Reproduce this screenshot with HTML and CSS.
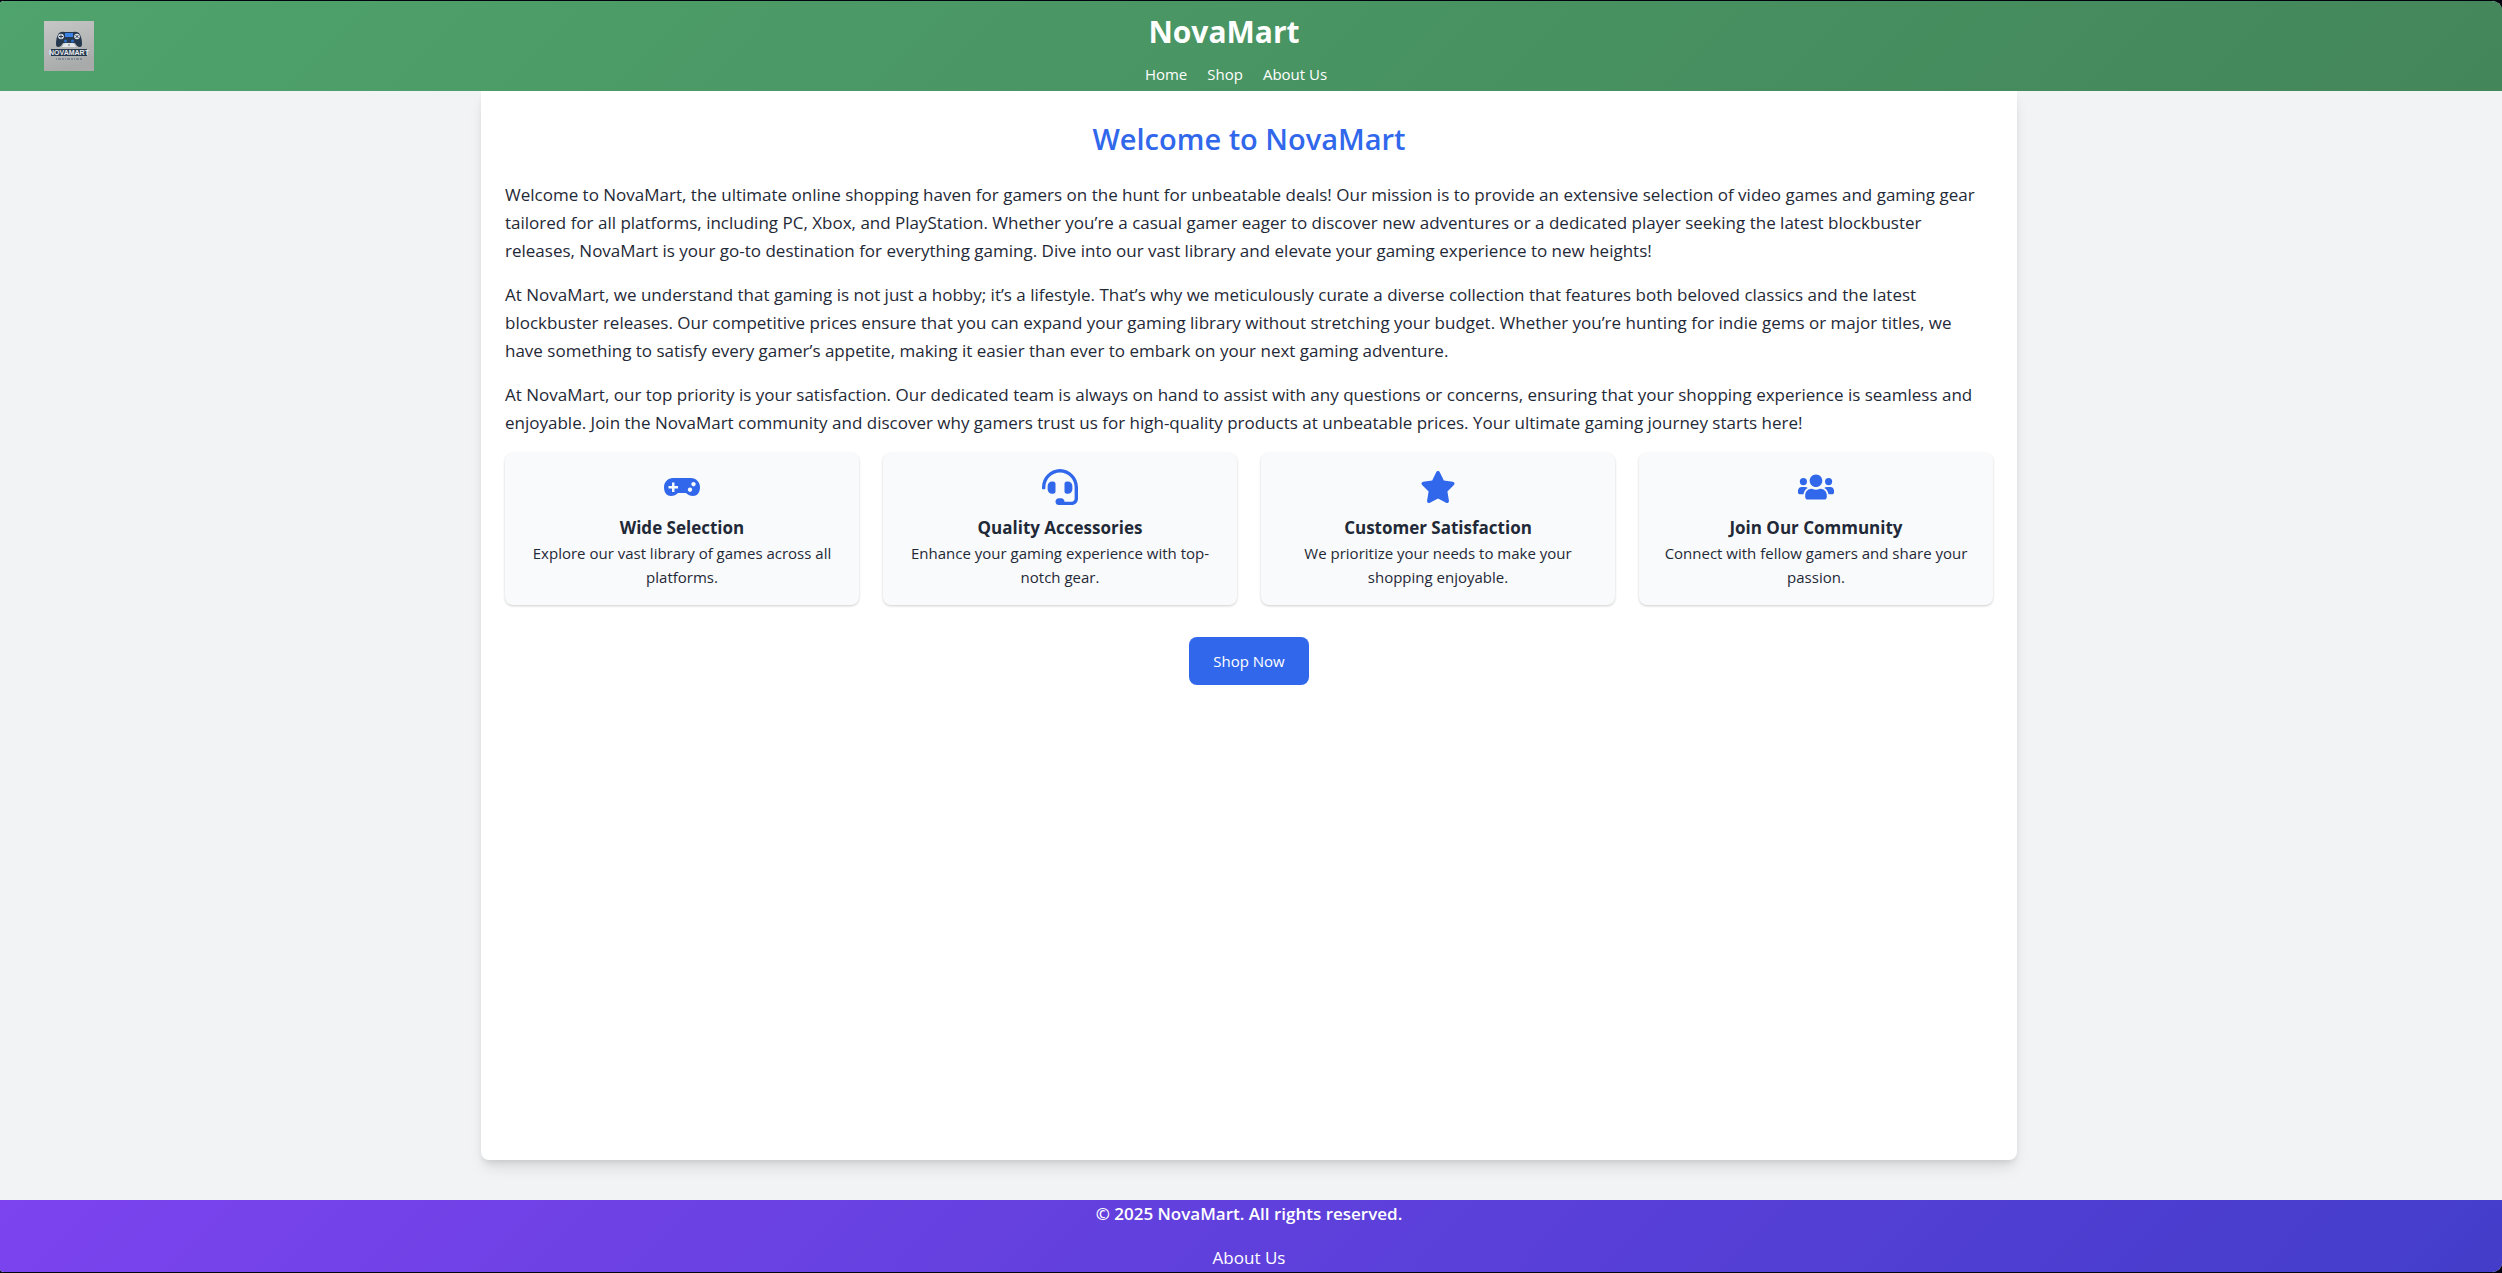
FILE: index.html
```html
<!DOCTYPE html>
<html lang="en">
<head>
<meta charset="utf-8">
<meta name="viewport" content="width=device-width, initial-scale=1">
<title>NovaMart</title>
<link rel="stylesheet" href="styles.css">
</head>
<body>
<div class="page">
  <header class="site-header">
    <a class="logo" href="#" aria-label="NovaMart home">
      <svg viewBox="0 0 50 50" width="50" height="50" aria-hidden="true">
        <defs>
          <linearGradient id="plate" x1="0" y1="0" x2="0.3" y2="1"><stop offset="0" stop-color="#c6c6c6"/><stop offset="1" stop-color="#a9abab"/></linearGradient>
        </defs>
        <rect width="50" height="50" fill="url(#plate)"/>
        <path d="M15 12q3-2 6-1h8q3-1 6 1 3 4 3 11 0 3-2 3-3 0-5-4H19q-2 4-5 4-2 0-2-3 0-7 3-11z" fill="#26384d"/>
        <path d="M18 26q2-4 4-4h6q2 0 4 4z" fill="#e4e7e9"/>
        <path d="M21 12h8v4h-8z" fill="#3b82e6"/>
        <circle cx="17" cy="15.500" r="2.800" fill="#dfe4e8"/><path d="M17 13.500v4M15 15.500h4" stroke="#26384d"/>
        <circle cx="33" cy="15.500" r="2.800" fill="#dfe4e8"/><path d="M31.600 14.100l2.800 2.800M34.400 14.100l-2.800 2.800" stroke="#26384d"/>
        <circle cx="21.500" cy="20" r="1.600" fill="#2f6fc4"/><circle cx="28.500" cy="20" r="1.600" fill="#2f6fc4"/>
        <circle cx="25" cy="24" r="0.700" fill="#26384d"/>
        <path d="M7 28h36v7H7z" fill="#26384d"/>
        <text x="25" y="34" text-anchor="middle" class="logo-text">NOVAMART</text>
        <path d="M12 38h26" stroke="#56677a" stroke-dasharray="1 1 3 1 2 1"/>
      </svg>
    </a>
    <div class="masthead">
      <h1 class="brand">NovaMart</h1>
      <nav class="nav">
        <a href="#">Home</a>
        <a href="#">Shop</a>
        <a href="#">About Us</a>
      </nav>
    </div>
  </header>

  <div class="stage">
    <main class="content">
      <h2 class="title">Welcome to NovaMart</h2>
      <div class="intro">
        <p>Welcome to NovaMart, the ultimate online shopping haven for gamers on the hunt for unbeatable deals! Our mission is to provide an extensive selection of video games and gaming gear tailored for all platforms, including PC, Xbox, and PlayStation. Whether you’re a casual gamer eager to discover new adventures or a dedicated player seeking the latest blockbuster releases, NovaMart is your go-to destination for everything gaming. Dive into our vast library and elevate your gaming experience to new heights!</p>
        <p>At NovaMart, we understand that gaming is not just a hobby; it’s a lifestyle. That’s why we meticulously curate a diverse collection that features both beloved classics and the latest blockbuster releases. Our competitive prices ensure that you can expand your gaming library without stretching your budget. Whether you’re hunting for indie gems or major titles, we have something to satisfy every gamer’s appetite, making it easier than ever to embark on your next gaming adventure.</p>
        <p>At NovaMart, our top priority is your satisfaction. Our dedicated team is always on hand to assist with any questions or concerns, ensuring that your shopping experience is seamless and enjoyable. Join the NovaMart community and discover why gamers trust us for high-quality products at unbeatable prices. Your ultimate gaming journey starts here!</p>
      </div>
      <section class="features">
        <article class="card">
          <svg class="icon" viewBox="0 0 36 36" aria-hidden="true"><path fill-rule="evenodd" d="M9 9h18c5 0 9 4 9 9 0 6-3 9-7 9-3 0-5-1-7-3h-8c-2 2-4 3-7 3-4 0-7-3-7-9 0-5 4-9 9-9zM8 13.500v3.500H4.500v2.500H8V23h2.500v-3.500H14V17h-3.500v-3.500zM29.500 13a2.200 2.200 0 1 0 .01 0zM26 18.500a2.200 2.200 0 1 0 .01 0z"/></svg>
          <h3>Wide Selection</h3>
          <p>Explore our vast library of games across all platforms.</p>
        </article>
        <article class="card">
          <svg class="icon" viewBox="0 0 512 512" aria-hidden="true"><path d="M192 208c0-17.670-14.330-32-32-32h-16c-35.350 0-64 28.650-64 64v48c0 35.350 28.650 64 64 64h16c17.670 0 32-14.330 32-32V208zm176 144c35.350 0 64-28.650 64-64v-48c0-35.350-28.650-64-64-64h-16c-17.670 0-32 14.330-32 32v112c0 17.670 14.330 32 32 32h16zM256 0C113.180 0 4.580 118.830 0 256v16c0 8.840 7.160 16 16 16h16c8.840 0 16-7.160 16-16v-16c0-114.690 93.310-208 208-208s208 93.310 208 208h-.12c.08 2.430.12 165.720.12 165.720 0 23.350-18.930 42.280-42.280 42.280H320c0-26.510-21.490-48-48-48h-32c-26.510 0-48 21.490-48 48s21.490 48 48 48h181.720c49.860 0 90.280-40.420 90.280-90.280V256C507.420 118.830 398.820 0 256 0z"/></svg>
          <h3>Quality Accessories</h3>
          <p>Enhance your gaming experience with top-notch gear.</p>
        </article>
        <article class="card">
          <svg class="icon" viewBox="0 0 576 512" aria-hidden="true"><path d="M316.900 18C311.600 7 300.400 0 288.100 0s-23.400 7-28.800 18L195 150.300 51.400 171.500c-12 1.800-22 10.200-25.700 21.700s-.7 24.200 7.900 32.700L137.800 329 113.200 474.700c-2 12 3 24.200 12.900 31.300s23 8 33.800 2.300l128.300-68.500 128.300 68.500c10.800 5.700 23.900 4.900 33.800-2.300s14.900-19.300 12.900-31.300L438.500 329 542.700 225.900c8.600-8.500 11.700-21.200 7.900-32.700s-13.700-19.900-25.700-21.700L381.200 150.300 316.900 18z"/></svg>
          <h3>Customer Satisfaction</h3>
          <p>We prioritize your needs to make your shopping enjoyable.</p>
        </article>
        <article class="card">
          <svg class="icon" viewBox="0 0 640 512" aria-hidden="true"><path d="M96 224a64 64 0 1 0 0-128 64 64 0 0 0 0 128zm448 0a64 64 0 1 0 0-128 64 64 0 0 0 0 128zm32 32h-64c-17.600 0-33.500 7.100-45.100 18.600 40.300 22.100 68.900 62 75.100 109.400h66c17.700 0 32-14.300 32-32v-32c0-35.300-28.700-64-64-64zm-256 0c61.900 0 112-50.100 112-112S381.900 32 320 32 208 82.100 208 144s50.100 112 112 112zm76.800 32h-8.300c-20.800 10-43.900 16-68.500 16s-47.600-6-68.500-16h-8.300C179.600 288 128 339.600 128 403.200V432c0 26.500 21.500 48 48 48h288c26.500 0 48-21.500 48-48v-28.800c0-63.600-51.600-115.200-115.200-115.200zm-223.700-13.400C161.500 263.100 145.600 256 128 256H64c-35.300 0-64 28.700-64 64v32c0 17.700 14.300 32 32 32h65.900c6.300-47.400 34.900-87.300 75.200-109.400z"/></svg>
          <h3>Join Our Community</h3>
          <p>Connect with fellow gamers and share your passion.</p>
        </article>
      </section>
      <button class="shop-button" type="button">Shop Now</button>
    </main>
  </div>

  <footer class="site-footer">
    <p class="copyright">© 2025 NovaMart. All rights reserved.</p>
    <a href="#">About Us</a>
  </footer>
</div>
</body>
</html>
```
FILE: styles.css
```css
* { box-sizing: border-box; margin: 0; }

body {
  background: #03030f;
  color: #1f2937;
  font-family: "Open Sans", "Noto Sans", sans-serif;
  font-size: 17px;
  line-height: 28px;
}

a { color: inherit; text-decoration: none; }

.page {
  display: flex;
  flex-direction: column;
  min-height: 100vh;
  overflow: hidden;
  border: solid #03030f;
  border-width: 1px 0;
  border-radius: 4px 10px 10px 4px;
  background: #f2f3f5;
}

.site-header {
  display: flex;
  align-items: center;
  min-height: 90px;
  padding: 0 124px 0 44px;
  background: linear-gradient(135deg, #4fa36c, #43865a);
  color: #fff;
}

.logo svg { display: block; }
.logo-text { font: bold 7px "Liberation Sans", sans-serif; fill: #e8ebee; }

.masthead {
  display: flex;
  flex: 1;
  flex-direction: column;
  align-items: center;
  gap: 10px;
  padding-top: 6px;
}

.brand {
  margin-right: 24px;
  font-size: 30px;
  line-height: 40px;
  font-weight: 700;
}

.nav {
  display: flex;
  gap: 20px;
  font-size: 15px;
  line-height: 24px;
}

.stage {
  display: flex;
  flex: 1;
  justify-content: center;
  padding: 0 4px 40px 0;
}

.content {
  display: flex;
  flex-direction: column;
  width: 100%;
  max-width: 1536px;
  padding: 30px 24px;
  border-radius: 0 0 8px 8px;
  background: #fff;
  box-shadow: 0 10px 15px -3px rgba(0, 0, 0, 0.1), 0 4px 6px -2px rgba(0, 0, 0, 0.1);
}

.title {
  margin-bottom: 24px;
  color: #3168eb;
  font-size: 29px;
  line-height: 36px;
  font-weight: 600;
  text-align: center;
}

.intro p { margin-bottom: 16px; }

.features {
  display: grid;
  grid-template-columns: repeat(auto-fit, minmax(280px, 1fr));
  gap: 24px;
}

.card {
  display: flex;
  flex-direction: column;
  align-items: center;
  padding: 16px;
  border-radius: 8px;
  background: #f9fafb;
  box-shadow: 0 1px 3px rgba(0, 0, 0, 0.12), 0 1px 2px rgba(0, 0, 0, 0.08);
  text-align: center;
}

.icon {
  width: 36px;
  height: 36px;
  margin-bottom: 10px;
  fill: #3168eb;
}

.card h3 { font-size: 17px; line-height: 26px; font-weight: 700; }
.card p { font-size: 15px; line-height: 24px; }

.shop-button {
  align-self: center;
  margin-top: 32px;
  padding: 12px 24px;
  border: 0;
  border-radius: 8px;
  background: #3168eb;
  color: #fff;
  font: inherit;
  font-size: 15px;
  line-height: 24px;
}

.site-footer {
  display: flex;
  flex-direction: column;
  align-items: center;
  gap: 16px;
  padding-right: 4px;
  background: linear-gradient(135deg, #7c43ee, #433dca);
  color: #fff;
}

.copyright { font-weight: 600; }
```
